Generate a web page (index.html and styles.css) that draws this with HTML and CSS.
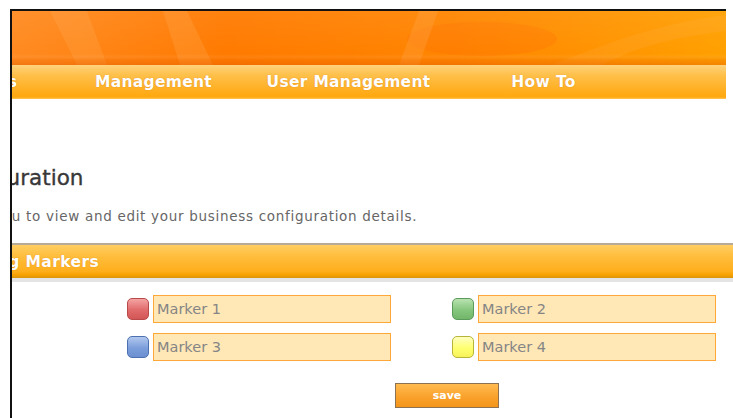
FILE: index.html
```html
<!DOCTYPE html>
<html lang="en">
<head>
<meta charset="utf-8">
<title>Business Configuration</title>
<link rel="stylesheet" href="styles.css">
</head>
<body>
<div class="frame">
  <header class="masthead">
    <div class="banner">
      <svg class="banner-art" width="714" height="54" viewBox="0 0 714 54" aria-hidden="true">
        <defs>
          <linearGradient id="bannerBase" x1="0" x2="1" y1="0" y2="0">
            <stop offset="0" stop-color="#ff8a20"/>
            <stop offset="0.3" stop-color="#ff7a00"/>
            <stop offset="0.62" stop-color="#ff8500"/>
            <stop offset="1" stop-color="#ffa000"/>
          </linearGradient>
          <linearGradient id="bannerShade" x1="0" x2="0" y1="0" y2="1">
            <stop offset="0" stop-color="#ffffff" stop-opacity="0.06"/>
            <stop offset="0.8" stop-color="#ffffff" stop-opacity="0"/>
            <stop offset="0.9" stop-color="#e86400" stop-opacity="0.2"/>
            <stop offset="1" stop-color="#e05a00" stop-opacity="0.4"/>
          </linearGradient>
        </defs>
        <rect width="714" height="54" fill="url(#bannerBase)"/>
        <ellipse cx="470" cy="28" rx="75" ry="17" fill="#ff7000" opacity="0.3"/>
        <path d="M38 0 H75 L95 54 H65 Z" fill="#ffa850" opacity="0.28"/>
        <path d="M151 0 H175 L201 54 H168 Z" fill="#ffa850" opacity="0.28"/>
        <path d="M407 0 H426 L407 54 H387 Z" fill="#ffa850" opacity="0.28"/>
        <path d="M540 54 C600 30 650 12 714 4 V20 C660 26 620 38 590 54 Z" fill="#ffb040" opacity="0.2"/>
        <rect width="714" height="54" fill="url(#bannerShade)"/>
      </svg>
    </div>
    <nav class="menu">
      <ul class="menu-list">
        <li>Reservations</li>
        <li>Management</li>
        <li>User Management</li>
        <li>How To</li>
      </ul>
    </nav>
  </header>

  <main class="page">
    <h1 class="title">Business Configuration</h1>
    <p class="intro">This page allows you to view and edit your business configuration details.</p>

    <section class="panel">
      <h2 class="panel-head"><span class="panel-label">Booking Markers</span></h2>
      <div class="markers">
        <label class="marker"><span class="swatch swatch-red"></span><input class="marker-name" type="text" value="Marker 1"></label>
        <label class="marker"><span class="swatch swatch-green"></span><input class="marker-name" type="text" value="Marker 2"></label>
        <label class="marker"><span class="swatch swatch-blue"></span><input class="marker-name" type="text" value="Marker 3"></label>
        <label class="marker"><span class="swatch swatch-yellow"></span><input class="marker-name" type="text" value="Marker 4"></label>
      </div>
      <div class="actions">
        <button class="save" type="button">save</button>
      </div>
    </section>
  </main>
</div>
</body>
</html>
```
FILE: styles.css
```css
* {
  box-sizing: border-box;
}

html,
body {
  margin: 0;
  background: #fff;
}

body {
  height: 418px;
  overflow: hidden;
  font-family: "DejaVu Sans", "Liberation Sans", sans-serif;
}

/* outer window frame: black rule down the left edge */
.frame {
  margin: 9px 0 0 10px;
  height: 409px;
  border-left: 2px solid #111;
  overflow: hidden;
}

.masthead {
  width: 714px;
  border-top: 2px solid #111;
}

.banner-art {
  display: block;
}

/* navigation strip */
.menu {
  height: 34px;
  overflow: hidden;
  background: linear-gradient(#ffd27c 0%, #ffc04a 30%, #ffb024 70%, #ffa80e 94%, #ffc45a 100%);
}

.menu-list {
  display: flex;
  margin: 0 0 0 -151px;
  padding: 0;
  list-style: none;
}

.menu-list li {
  flex: 0 0 195px;
  text-align: center;
  line-height: 34px;
  font-size: 15.5px;
  font-weight: bold;
  letter-spacing: 0.3px;
  color: #fff;
  text-shadow: 0 0 1px rgba(170, 80, 0, 0.5);
  white-space: nowrap;
}

/* page body, scrolled horizontally so its left part is out of view */
.page {
  margin-left: -200px;
  width: 945px;
}

.title {
  margin: 66px 0 0;
  padding-left: 24px;
  font-size: 21.5px;
  line-height: 26px;
  font-weight: normal;
  color: #383838;
  -webkit-text-stroke: 0.35px #383838;
  white-space: nowrap;
}

.intro {
  margin: 17px 0 0;
  padding-left: 54px;
  font-size: 13.5px;
  line-height: 16px;
  letter-spacing: 0.7px;
  color: #666;
  white-space: nowrap;
}

.panel-head {
  margin: 19px 0 0;
  height: 39px;
  padding-left: 134px;
  border-top: 2px solid #b5ab98;
  border-bottom: 4px solid #e4e4e4;
  background: linear-gradient(#ffce62 0%, #ffbd3c 35%, #ffae1c 80%, #f5a000 92%, #d9950f 100%);
  font-size: 15.5px;
  letter-spacing: 0.4px;
  line-height: 35px;
  font-weight: bold;
  color: #fff;
  text-shadow: 0 0 1px rgba(170, 80, 0, 0.45);
  white-space: nowrap;
}

.markers {
  display: grid;
  grid-template-columns: 264px 264px;
  column-gap: 61px;
  row-gap: 10px;
  margin-top: 13px;
  padding-left: 315px;
}

.marker {
  display: flex;
  align-items: center;
  gap: 4px;
}

.swatch {
  flex: 0 0 22px;
  width: 22px;
  height: 22px;
  border-radius: 5px;
  border: 1px solid;
}

.swatch-red {
  border-color: #b94a4a;
  background: linear-gradient(#f4a3a3, #e06a6a 55%, #d35656);
}

.swatch-green {
  border-color: #5a9a5a;
  background: linear-gradient(#b8e2b0, #86c67e 55%, #72b66a);
}

.swatch-blue {
  border-color: #4c70b0;
  background: linear-gradient(#b2c8ee, #7b9edb 55%, #6b8fd0);
}

.swatch-yellow {
  border-color: #b8b43a;
  background: linear-gradient(#ffffc0, #ffff70 55%, #f6f25a);
}

.marker-name {
  width: 238px;
  height: 28px;
  margin: 0;
  padding: 0 3px;
  border: 1px solid #ffa83a;
  background: #ffe7b6;
  font-family: "DejaVu Sans", "Liberation Sans", sans-serif;
  font-size: 14.5px;
  color: #858585;
  outline: none;
}

.actions {
  margin-top: 22px;
  padding-left: 583px;
}

.save {
  display: block;
  width: 104px;
  height: 25px;
  padding: 0;
  border: 1px solid #8c7252;
  background: linear-gradient(#ffbb50, #f9a02a 60%, #f3951a);
  font-family: "DejaVu Sans", "Liberation Sans", sans-serif;
  font-size: 11px;
  font-weight: bold;
  color: #fff;
  cursor: pointer;
}
```
